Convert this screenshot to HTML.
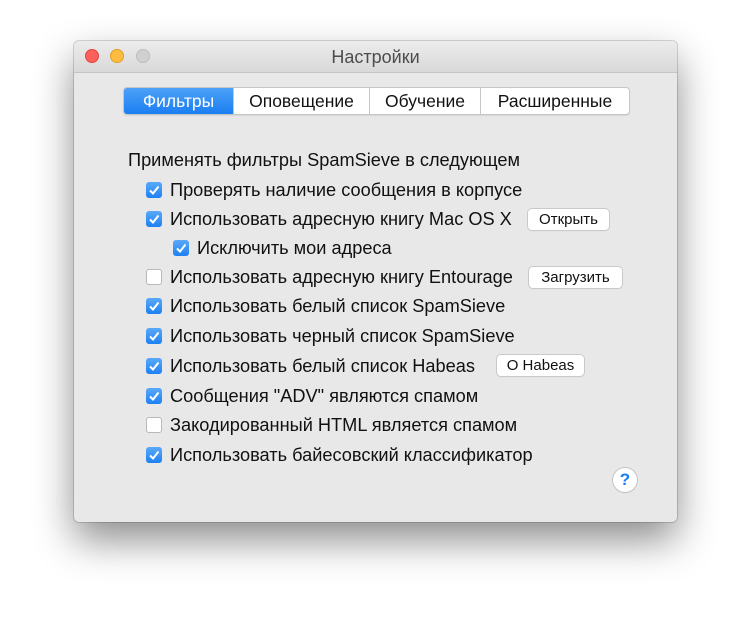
<!DOCTYPE html>
<html><head><meta charset="utf-8"><style>
body{margin:0;width:750px;height:628px;background:#fff;font-family:"Liberation Sans",sans-serif;position:relative;overflow:hidden}
.win{position:absolute;left:74px;top:41px;width:603px;height:481px;background:#e8e8e8;border-radius:5px;box-shadow:0 18px 40px rgba(0,0,0,.45),0 0 0 1px rgba(0,0,0,.15)}
.tb{position:absolute;left:0;top:0;width:603px;height:31px;background:linear-gradient(#ececec,#d9d9d9);border-bottom:1px solid #c4c4c4;border-radius:5px 5px 0 0;text-align:center;line-height:33px;font-size:18px;color:#4d4d4d}
.dot{position:absolute;top:8px;width:14px;height:14px;border-radius:50%}
.tabs{position:absolute;left:49px;top:46px;height:26px;display:flex;border:1px solid #c6c6c6;border-radius:4px;overflow:hidden;background:#fff;font-size:17.5px;line-height:27px;box-shadow:0 1px 1px rgba(0,0,0,.08)}
.tabs div{text-align:center;border-left:1px solid #c6c6c6;color:#111}
.tabs div.a{background:linear-gradient(#4da1f7,#1a7ef2);color:#fff;border-left:none}
.t{position:absolute;font-size:18.2px;color:#111;white-space:nowrap}
.cb{position:absolute;width:16px;height:16px;border-radius:3px;box-sizing:border-box}
.on{background:linear-gradient(#5aa9f9,#1d80f2)}
.off{background:#fff;border:1px solid #b8b8b8}
.cb svg{position:absolute;left:2px;top:2px}
.btn{position:absolute;height:21px;background:#fff;border-radius:4px;box-shadow:0 0 0 1px #c9c9c9,0 1px 1px rgba(0,0,0,.1);font-size:15px;line-height:22px;text-align:center;color:#111}
.help{position:absolute;left:539px;top:427px;width:24px;height:24px;border-radius:50%;background:#fff;box-shadow:0 0 0 1px #c4c4c4,0 1px 1px rgba(0,0,0,.15);text-align:center;line-height:24px;font-size:17px;font-weight:bold;color:#1a7ef2}
</style></head><body>
<div class="win">
<div class="tb">Настройки
<div class="dot" style="left:11px;background:#fc605c;border:1px solid #e0443e;box-sizing:border-box"></div>
<div class="dot" style="left:36px;background:#fdbc40;border:1px solid #dea123;box-sizing:border-box"></div>
<div class="dot" style="left:62px;background:#d0d0d0;border:1px solid #bdbdbd;box-sizing:border-box"></div>
</div>
<div class="tabs"><div class="a" style="width:109px">Фильтры</div><div style="width:135px">Оповещение</div><div style="width:110px">Обучение</div><div style="width:148px">Расширенные</div></div>
<div class="t" style="left:54px;top:109px">Применять фильтры SpamSieve в следующем</div>
<div class="cb on" style="left:72px;top:141px"><svg width="12" height="12"><path d="M2 6.5L5 9.5L10.5 2.5" stroke="#fff" stroke-width="2" fill="none"/></svg></div>
<div class="t" style="left:96px;top:139px">Проверять наличие сообщения в корпусе</div>
<div class="cb on" style="left:72px;top:170px"><svg width="12" height="12"><path d="M2 6.5L5 9.5L10.5 2.5" stroke="#fff" stroke-width="2" fill="none"/></svg></div>
<div class="t" style="left:96px;top:168px">Использовать адресную книгу Mac OS X</div>
<div class="btn" style="left:454px;top:168px;width:81px">Открыть</div>
<div class="cb on" style="left:99px;top:199px"><svg width="12" height="12"><path d="M2 6.5L5 9.5L10.5 2.5" stroke="#fff" stroke-width="2" fill="none"/></svg></div>
<div class="t" style="left:123px;top:197px">Исключить мои адреса</div>
<div class="cb off" style="left:72px;top:228px"></div>
<div class="t" style="left:96px;top:226px">Использовать адресную книгу Entourage</div>
<div class="btn" style="left:455px;top:226px;width:93px">Загрузить</div>
<div class="cb on" style="left:72px;top:257px"><svg width="12" height="12"><path d="M2 6.5L5 9.5L10.5 2.5" stroke="#fff" stroke-width="2" fill="none"/></svg></div>
<div class="t" style="left:96px;top:255px">Использовать белый список SpamSieve</div>
<div class="cb on" style="left:72px;top:287px"><svg width="12" height="12"><path d="M2 6.5L5 9.5L10.5 2.5" stroke="#fff" stroke-width="2" fill="none"/></svg></div>
<div class="t" style="left:96px;top:285px">Использовать черный список SpamSieve</div>
<div class="cb on" style="left:72px;top:317px"><svg width="12" height="12"><path d="M2 6.5L5 9.5L10.5 2.5" stroke="#fff" stroke-width="2" fill="none"/></svg></div>
<div class="t" style="left:96px;top:315px">Использовать белый список Habeas</div>
<div class="btn" style="left:423px;top:314px;width:87px">O Habeas</div>
<div class="cb on" style="left:72px;top:347px"><svg width="12" height="12"><path d="M2 6.5L5 9.5L10.5 2.5" stroke="#fff" stroke-width="2" fill="none"/></svg></div>
<div class="t" style="left:96px;top:345px">Сообщения "ADV" являются спамом</div>
<div class="cb off" style="left:72px;top:376px"></div>
<div class="t" style="left:96px;top:374px">Закодированный HTML является спамом</div>
<div class="cb on" style="left:72px;top:406px"><svg width="12" height="12"><path d="M2 6.5L5 9.5L10.5 2.5" stroke="#fff" stroke-width="2" fill="none"/></svg></div>
<div class="t" style="left:96px;top:404px">Использовать байесовский классификатор</div>
<div class="help">?</div>
</div>
</body></html>
